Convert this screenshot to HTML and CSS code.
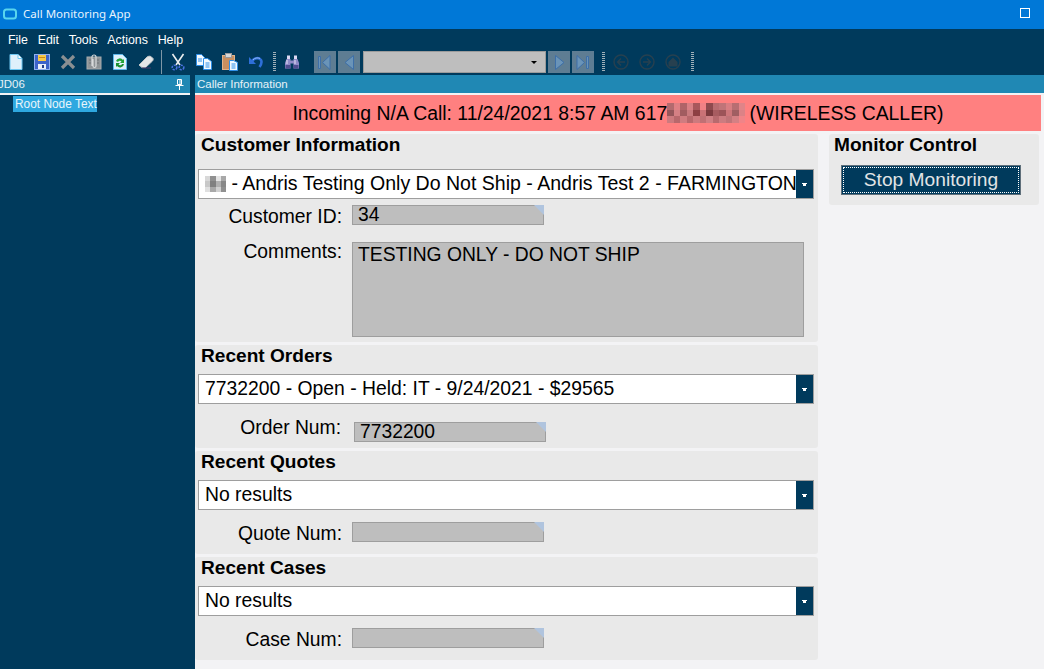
FILE: index.html
```html
<!DOCTYPE html>
<html lang="en">
<head>
<meta charset="utf-8">
<title>Call Monitoring App</title>
<link rel="stylesheet" href="styles.css">
</head>
<body>
<div class="app">
  <header class="titlebar">
    <svg class="app-icon" width="16" height="14" viewBox="0 0 16 14"><rect x="2" y="2.500" width="12" height="9" rx="2.500" fill="#0078d7" stroke="#59d5ee" stroke-width="2"/></svg>
    <span class="title">Call Monitoring App</span>
    <span class="max-btn"></span>
  </header>
  <nav class="menubar">
    <span>File</span><span>Edit</span><span>Tools</span><span>Actions</span><span>Help</span>
  </nav>
  <div class="toolbar">
    <span class="tb"><svg width="16" height="16" viewBox="0 0 16 16"><path d="M2 .5h8l4 4v11H2z" fill="#dff0fb" stroke="#6ec6f0"/><path d="M10 .5v4h4" fill="#fff" stroke="#6ec6f0"/></svg></span>
    <span class="tb"><svg width="16" height="16" viewBox="0 0 16 16"><rect x=".5" y=".5" width="15" height="15" fill="#3d63c9" stroke="#8fb0ee"/><rect x="4" y="1" width="8" height="6" fill="#f7c948"/><rect x="5" y="3" width="6" height="1" fill="#c98a1b"/><rect x="4" y="10" width="8" height="5" fill="#e8eef8"/><rect x="8" y="11" width="2" height="3" fill="#24408c"/></svg></span>
    <span class="tb"><svg width="16" height="16" viewBox="0 0 16 16"><path d="M2 2l12 12M14 2L2 14" stroke="#8a8f92" stroke-width="3.200"/></svg></span>
    <span class="tb"><svg width="16" height="16" viewBox="0 0 16 16"><rect x="1" y="3" width="14" height="12" fill="#8f9497" stroke="#a8acae"/><path d="M6 12V3a2 2 0 0 1 4 0v9a1.500 1.500 0 0 1-3 0V5" fill="none" stroke="#d8dadb" stroke-width="1.200"/><path d="M3 6h2M11 6h2M3 9h2M11 9h2" stroke="#6e7376"/></svg></span>
    <span class="tb"><svg width="14" height="16" viewBox="0 0 14 16"><path d="M.5.5h9l4 4v11H.5z" fill="#dff0fb" stroke="#5fb7ea"/><path d="M3 7a4 4 0 0 1 7-1l1-1v4H7l1.500-1.500A2 2 0 0 0 5 8z" fill="#25a538"/><path d="M11 10a4 4 0 0 1-7 2l-1 1V9h4l-1.500 1.500A2 2 0 0 0 9 10z" fill="#1b8f2e"/></svg></span>
    <span class="tb"><svg width="16" height="16" viewBox="0 0 16 16"><path d="M1 11l8-8q2-1.500 4-.5l2 2q.5 1.500-.5 2.500l-7 6.500H4z" fill="#e4e6e8" stroke="#bfc3c6"/><path d="M4 14h9" stroke="#4b3b6d"/></svg></span>
    <span class="sep"></span>
    <span class="tb"><svg width="14" height="18" viewBox="0 0 14 18"><path d="M1.500 1L9 12M12.500 1L5 12" stroke="#eceeef" stroke-width="1.600"/><circle cx="3.500" cy="14.500" r="2.300" fill="none" stroke="#4a72e0" stroke-width="1.600" stroke-dasharray="2 1"/><circle cx="10.500" cy="14.500" r="2.300" fill="none" stroke="#4a72e0" stroke-width="1.600" stroke-dasharray="2 1"/></svg></span>
    <span class="tb"><svg width="16" height="16" viewBox="0 0 16 16"><path d="M.5.5h5l3 3v8H.5z" fill="#f2f9ff" stroke="#2f8fe8"/><path d="M7.500 4.500h4l4 3v8h-8z" fill="#f2f9ff" stroke="#2f8fe8"/><path d="M2 5h4M2 7h4M9.500 9h4M9.500 11h4M9.500 13h4" stroke="#2f8fe8"/></svg></span>
    <span class="tb"><svg width="16" height="18" viewBox="0 0 16 18"><rect x=".5" y="2.500" width="12" height="14" fill="#c98f5f" stroke="#e0b48c"/><rect x="3.500" y=".5" width="6" height="4" fill="#d8d8d8" stroke="#9a9a9a"/><path d="M7.500 7.500h4l4 2v8h-8z" fill="#f2f9ff" stroke="#2f8fe8"/><path d="M9.500 11h4M9.500 13h4M9.500 15h4" stroke="#2f8fe8"/></svg></span>
    <span class="tb"><svg width="16" height="14" viewBox="0 0 16 14"><path d="M1 2v7h7z" fill="#2e6fd8"/><path d="M4 7.500A5 4.500 0 0 1 13 5q1.500 3-1.500 7" fill="none" stroke="#2e6fd8" stroke-width="2.600"/><path d="M5 5A5 4 0 0 1 12 3.500" fill="none" stroke="#8db4f2"/></svg></span>
    <span class="grip grip-first"></span>
    <span class="tb"><svg width="16" height="16" viewBox="0 0 16 16"><rect x="3" y="1.500" width="3" height="4" fill="#dcd8f2"/><rect x="10" y="1.500" width="3" height="4" fill="#dcd8f2"/><path d="M2.500 5h4v1.500h3V5h4L15 9v5.500H9.500v-5h-3v5H1V9z" fill="#8f8bc8"/><rect x="1.500" y="11" width="5" height="3.500" fill="#4f4d90"/><rect x="9.500" y="11" width="5" height="3.500" fill="#4f4d90"/><path d="M3 6v4M11 6v4" stroke="#e4e2f6"/></svg></span>
    <span class="nav nav-first"><svg width="22" height="22" viewBox="0 0 22 22"><path d="M4.500 5.500h2v12h-2zM16 4.500L8.500 11.500 16 18.500z" fill="#6a94b8" stroke="#3d6fa8"/></svg></span>
    <span class="nav"><svg width="22" height="22" viewBox="0 0 22 22"><path d="M15.500 4.500L7 11.500l8.500 7z" fill="#6a94b8" stroke="#3d6fa8"/></svg></span>
    <span class="tb-combo"><span class="tb-caret"></span></span>
    <span class="nav"><svg width="22" height="22" viewBox="0 0 22 22"><path d="M7.500 4.500L16 11.500l-8.500 7z" fill="#6a94b8" stroke="#3d6fa8"/></svg></span>
    <span class="nav"><svg width="22" height="22" viewBox="0 0 22 22"><path d="M5 4.500L12.500 11.500 5 18.500zM14.500 5.500h2v12h-2z" fill="#6a94b8" stroke="#3d6fa8"/></svg></span>
    <span class="grip grip-nav"></span>
    <span class="circ"><svg width="16" height="16" viewBox="0 0 16 16"><circle cx="8" cy="8" r="7" fill="none" stroke="#27404f" stroke-width="1.400"/><path d="M12 8H4.500M8 4.500L4.500 8 8 11.500" fill="none" stroke="#27404f" stroke-width="1.400"/></svg></span>
    <span class="circ"><svg width="16" height="16" viewBox="0 0 16 16"><circle cx="8" cy="8" r="7" fill="none" stroke="#27404f" stroke-width="1.400"/><path d="M4 8h7.500M8 4.500L11.500 8 8 11.500" fill="none" stroke="#27404f" stroke-width="1.400"/></svg></span>
    <span class="circ"><svg width="16" height="16" viewBox="0 0 16 16"><circle cx="8" cy="8" r="7" fill="none" stroke="#27404f" stroke-width="1.400"/><path d="M3.500 8L8 3.500 12.500 8v4.500h-9z" fill="#27404f"/></svg></span>
    <span class="grip grip-end"></span>
  </div>
  <div class="workspace">
    <aside class="side">
      <div class="pane-head side-head"><span class="side-title">JD06</span>
        <svg class="pin" width="9" height="11" viewBox="0 0 9 11"><path d="M2.500.5h4v5h-4zM.5 6.500h8M4.500 6.500V11M5 1v4" fill="none" stroke="#fff"/></svg>
      </div>
      <div class="tree"><span class="tree-node">Root Node Text</span></div>
    </aside>
    <div class="divider"></div>
    <main class="content">
      <div class="pane-head content-head">Caller Information</div>
      <div class="body">
        <div class="alert">Incoming N/A Call: 11/24/2021 8:57 AM 617<svg class="blur" width="78" height="20" viewBox="0 0 12 3" shape-rendering="crispEdges"><rect width="1" height="1" x="0" fill="#b46a6e"/><rect width="1" height="1" x="1" fill="#e08084"/><rect width="1" height="1" x="2" fill="#b06468"/><rect width="1" height="1" x="3" fill="#d98084"/><rect width="1" height="1" x="4" fill="#a9585c"/><rect width="1" height="1" x="5" fill="#f08185"/><rect width="1" height="1" x="6" fill="#8f4a4e"/><rect width="1" height="1" x="7" fill="#b96c70"/><rect width="1" height="1" x="8" fill="#c07478"/><rect width="1" height="1" x="9" fill="#d87e82"/><rect width="1" height="1" x="10" fill="#b86e72"/><rect width="1" height="1" x="11" fill="#e08488"/><rect width="1" height="1" x="0" y="1" fill="#95565a"/><rect width="1" height="1" x="1" y="1" fill="#d58084"/><rect width="1" height="1" x="2" y="1" fill="#a15c60"/><rect width="1" height="1" x="3" y="1" fill="#c97a7e"/><rect width="1" height="1" x="4" y="1" fill="#8d3f43"/><rect width="1" height="1" x="5" y="1" fill="#ca7276"/><rect width="1" height="1" x="6" y="1" fill="#7c3a3e"/><rect width="1" height="1" x="7" y="1" fill="#a75c60"/><rect width="1" height="1" x="8" y="1" fill="#9c5458"/><rect width="1" height="1" x="9" y="1" fill="#cd767a"/><rect width="1" height="1" x="10" y="1" fill="#a05e62"/><rect width="1" height="1" x="11" y="1" fill="#dc8286"/><rect width="1" height="1" x="0" y="2" fill="#cc7a7e"/><rect width="1" height="1" x="1" y="2" fill="#b8686c"/><rect width="1" height="1" x="2" y="2" fill="#d07c80"/><rect width="1" height="1" x="3" y="2" fill="#b8686c"/><rect width="1" height="1" x="4" y="2" fill="#cc7a7e"/><rect width="1" height="1" x="5" y="2" fill="#c07074"/><rect width="1" height="1" x="6" y="2" fill="#d08084"/><rect width="1" height="1" x="7" y="2" fill="#b86a6e"/><rect width="1" height="1" x="8" y="2" fill="#cc7c80"/><rect width="1" height="1" x="9" y="2" fill="#c07478"/><rect width="1" height="1" x="10" y="2" fill="#d48084"/><rect width="1" height="1" x="11" y="2" fill="#f08488"/></svg> (WIRELESS CALLER)</div>
        <div class="columns">
          <div class="col-main">
            <section class="panel panel-customer">
              <h2>Customer Information</h2>
              <div class="select select-customer"><span class="select-text"><svg class="blur-small" width="21" height="16" viewBox="0 0 4 3" shape-rendering="crispEdges"><rect width="1" height="1" x="0" fill="#d8d8d8"/><rect width="1" height="1" x="1" fill="#909090"/><rect width="1" height="1" x="2" fill="#e4e4e4"/><rect width="1" height="1" x="3" fill="#a8a8a8"/><rect width="1" height="1" x="0" y="1" fill="#c8c8c8"/><rect width="1" height="1" x="1" y="1" fill="#808080"/><rect width="1" height="1" x="2" y="1" fill="#b0b0b0"/><rect width="1" height="1" x="3" y="1" fill="#888888"/><rect width="1" height="1" x="0" y="2" fill="#e0e0e0"/><rect width="1" height="1" x="1" y="2" fill="#a8a8a8"/><rect width="1" height="1" x="2" y="2" fill="#d0d0d0"/><rect width="1" height="1" x="3" y="2" fill="#909090"/></svg> - Andris Testing Only Do Not Ship - Andris Test 2 - FARMINGTON</span><span class="select-btn"><i></i></span></div>
              <div class="row row-id"><label>Customer ID:</label><div class="field">34</div></div>
              <div class="row row-comments"><label>Comments:</label><div class="field-area">TESTING ONLY - DO NOT SHIP</div></div>
            </section>
            <section class="panel">
              <h2>Recent Orders</h2>
              <div class="select"><span class="select-text">7732200 - Open - Held: IT - 9/24/2021 - $29565</span><span class="select-btn"><i></i></span></div>
              <div class="row row-order"><label>Order Num:</label><div class="field">7732200</div></div>
            </section>
            <section class="panel">
              <h2>Recent Quotes</h2>
              <div class="select"><span class="select-text">No results</span><span class="select-btn"><i></i></span></div>
              <div class="row"><label>Quote Num:</label><div class="field"></div></div>
            </section>
            <section class="panel">
              <h2>Recent Cases</h2>
              <div class="select"><span class="select-text">No results</span><span class="select-btn"><i></i></span></div>
              <div class="row"><label>Case Num:</label><div class="field"></div></div>
            </section>
          </div>
          <section class="panel panel-monitor">
            <h2>Monitor Control</h2>
            <button class="stop" type="button"><span>Stop Monitoring</span></button>
          </section>
        </div>
      </div>
    </main>
  </div>
</div>
</body>
</html>
```

FILE: styles.css
```css
* { box-sizing: border-box; }
html, body { margin: 0; height: 100%; overflow: hidden; }
body { font-family: "Liberation Sans", Arial, sans-serif; color: #000; background: #003a5c; }
.app { width: 1044px; height: 669px; display: flex; flex-direction: column; }

.titlebar { height: 29px; flex: none; background: #0078d7; color: #fff; display: flex; align-items: center; font-size: 11.5px; padding: 0 0 2px 2px; }
.app-icon { flex: none; }
.title { margin-left: 5px; font-family: "Noto Sans", sans-serif; color: #e8f3fc; flex: 1; }
.max-btn { width: 10px; height: 10px; border: 1px solid #fff; margin: 0 14px 1px 0; }

.menubar { height: 21px; flex: none; background: #003a5c; color: #fff; display: flex; align-items: center; font-size: 12.4px; padding: 1px 0 0 8px; gap: 9.7px; }

.toolbar { height: 25px; flex: none; background: #003a5c; display: flex; align-items: flex-start; padding-left: 3px; padding-top: 1px; }
.tb { width: 26px; height: 22px; display: flex; align-items: center; justify-content: center; flex: none; }
.sep { width: 1px; height: 24px; background: #7f97a6; margin: -1px 3px 0 2px; flex: none; }
.grip { width: 3px; height: 20px; margin: 1px 5px 0 5px; flex: none; background: repeating-linear-gradient(to bottom, #9fb0b9 0 1px, transparent 1px 2px); }
.grip-first { margin: 1px 3px 0 4px; }
.nav { width: 22px; height: 22px; background: #5e7d93; margin-left: 2px; flex: none; display: block; }
.nav-first { margin-left: 9px; }
.tb-combo { width: 183px; height: 22px; margin-left: 3px; background: #bebebe; border: 1px solid #9b9b9b; flex: none; display: flex; align-items: center; justify-content: flex-end; padding-right: 8px; }
.tb-caret { width: 0; height: 0; border: 3px solid transparent; border-top: 3px solid #000; border-bottom: 0; }
.grip-nav { margin: 1px 3px 0 8px; }
.circ { width: 26px; height: 22px; display: flex; align-items: center; justify-content: center; flex: none; }
.grip-end { margin-left: 5px; }

.workspace { flex: 1; display: flex; min-height: 0; }
.side { width: 190px; flex: none; display: flex; flex-direction: column; }
.pane-head { height: 18px; flex: none; background: #2088b4; color: #e8f2f7; font-size: 11.5px; display: flex; align-items: center; }
.side-head { justify-content: space-between; padding-right: 6px; }
.side-title { margin-left: -2px; }
.pin { flex: none; }
.tree { flex: 1; border-top: 2px solid #f3f3f5; background: #003a5c; padding: 1px 0 0 13px; }
.tree-node { display: block; width: 84px; height: 16px; background: #2ea8e0; color: #e9f5fb; font-size: 11.9px; line-height: 16px; padding-left: 2px; white-space: nowrap; }

.divider { width: 5px; flex: none; background: #003a5c; }
.content { flex: 1; display: flex; flex-direction: column; min-width: 0; background: #f3f3f5; }
.content-head { padding-left: 2px; }
.body { flex: 1; border-top: 2px solid #f3f3f5; }
.alert { width: 846px; height: 36px; background: #ff8080; font-size: 19.4px; display: flex; align-items: center; justify-content: center; white-space: pre; }
.blur { flex: none; margin-right: -1px; }
.columns { display: flex; gap: 11px; margin-top: 3px; align-items: flex-start; }
.col-main { width: 623px; display: flex; flex-direction: column; gap: 3px; }

.panel { background: #e9e9e9; border-radius: 3px; height: 103px; padding: 0 4px 0 3px; }
.panel h2 { margin: 0; font-size: 19.1px; font-weight: 700; line-height: 21px; padding-left: 3px; height: 29px; }
.panel-customer { height: 208px; }
.panel-customer h2 { height: 35px; }
.panel-monitor { width: 210px; height: 71px; padding: 0 18px 0 12px; }
.panel-monitor h2 { padding-left: 0; margin-left: -7px; height: 31px; }

.select { width: 616px; height: 30px; background: #fff; border: 1px solid #9e9e9e; display: flex; align-items: stretch; font-size: 19.35px; }
.select-customer { font-size: 19.55px; }
.select-text { flex: 1; min-width: 0; padding-left: 6px; line-height: 26px; white-space: nowrap; overflow: hidden; }
.select-btn { width: 17px; flex: none; background: #003a5c; display: flex; align-items: center; justify-content: center; }
.select-btn i { width: 5px; height: 3px; background: linear-gradient(#fff 0 1px, transparent 1px), linear-gradient(#fff,#fff) center / 3px 100% no-repeat; display: block; }
.blur-small { vertical-align: -2px; }

.row { display: flex; margin-top: 12px; font-size: 19.3px; }
.row label { width: 144px; text-align: right; flex: none; line-height: 21px; margin-top: 1px; }
.field { position: relative; width: 192px; height: 20px; margin-left: 10px; background: #bebebe; border: 1px solid #9e9e9e; line-height: 17px; padding-left: 5px; flex: none; }
.field::after { content: ""; position: absolute; top: -1px; right: -1px; width: 10px; height: 10px; background: #b0c4de; clip-path: polygon(0 0, 100% 0, 100% 100%); }
.row-id { margin-top: 6px; }
.row-comments { margin-top: 15px; }
.row-comments label { margin-top: -1px; }
.field-area { width: 452px; height: 95px; margin-left: 10px; background: #bebebe; border: 1px solid #9e9e9e; padding-left: 5px; line-height: 24px; flex: none; }
.row-order { margin-top: 18px; }
.row-order label { width: 143px; margin-top: -5px; }
.row-order .field { margin-left: 13px; }

.stop { width: 180px; height: 30px; background: #003a5c; border: 1px solid #5f6f7a; padding: 1px; color: #e1e4e6; font: 19.2px "Liberation Sans", Arial, sans-serif; display: block; }
.stop span { display: block; height: 100%; border: 1px dotted #fff; line-height: 24px; }
```
